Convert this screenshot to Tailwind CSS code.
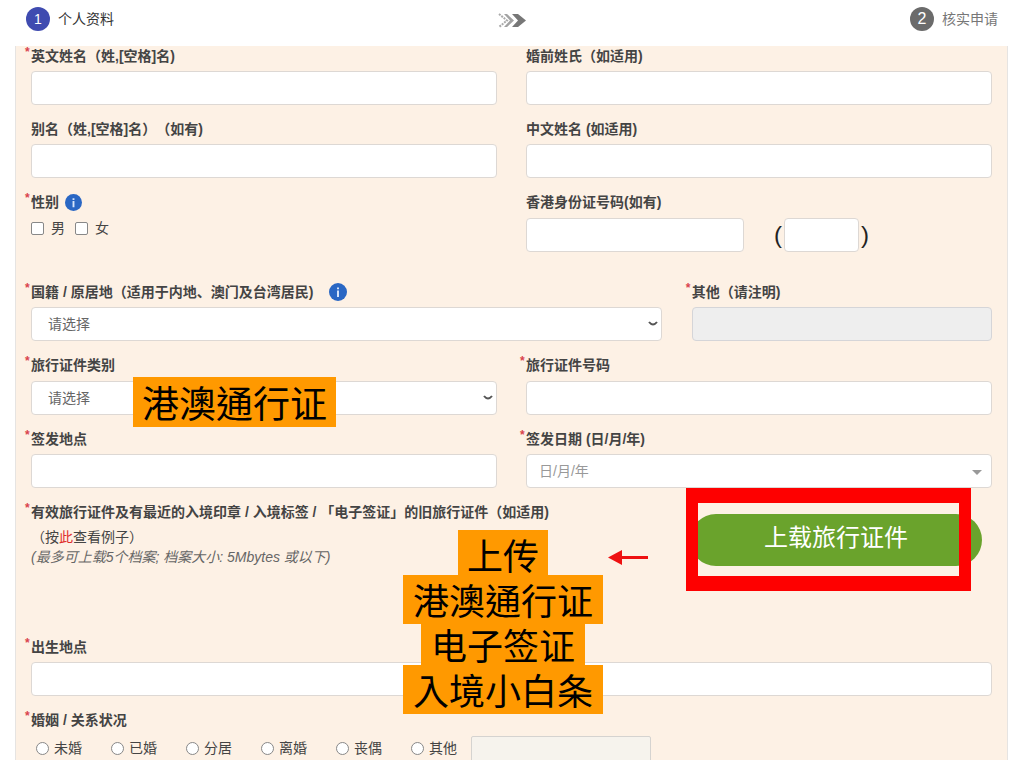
<!DOCTYPE html>
<html lang="zh-CN">
<head>
<meta charset="utf-8">
<meta name="viewport" content="width=device-width, initial-scale=1">
<title>个人资料</title>
<script src="https://cdn.jsdelivr.net/npm/@tailwindcss/browser@4"></script>
</head>
<body class="bg-white font-['Liberation_Sans','Noto_Sans_CJK_SC',sans-serif] text-sm leading-5 text-[#444] overflow-x-hidden [text-spacing-trim:space-all]">
<header class="flex h-[46px] items-start justify-between px-[26px] pt-[7px]">
  <div class="flex items-center gap-2 text-[#333]">
    <span class="flex size-6 items-center justify-center rounded-full bg-[#3f4bb0] text-sm text-white">1</span>
    <span>个人资料</span>
  </div>
  <svg class="mt-1.5 h-[15px] w-7" viewBox="0 0 28 15" fill="none" aria-hidden="true">
    <path d="M1 1l8 6.500-8 6.500" stroke="#aaa" stroke-width="2" stroke-dasharray="2 1"/>
    <path d="M6 1h3l7 6.500-7 6.500H6l6-6.500z" fill="#a2a2a2"/>
    <path d="M14 1h6l8 6.500-8 6.500h-6l6-6.500z" fill="#777"/>
  </svg>
  <div class="flex items-center gap-2 text-[#777]">
    <span class="flex size-6 items-center justify-center rounded-full bg-[#6b6b6b] text-base text-white">2</span>
    <span>核实申请</span>
  </div>
</header>

<main class="mr-4 ml-[15px] overflow-hidden border-x border-[#e6e4e2] bg-[#fdf1e5] px-[15px] pb-5">
<form>
  <div class="mb-3.5 grid grid-cols-2 gap-[29px]">
    <div>
      <label for="en" class="relative mb-[5px] block font-bold"><span class="absolute -top-0.5 -left-1.5 text-xs text-[#d9434e]">*</span>英文姓名（姓,[空格]名)</label>
      <input id="en" class="block h-[34px] w-full rounded border border-[#ddd8d4] bg-white px-3">
    </div>
    <div>
      <label for="maiden" class="mb-[5px] block font-bold">婚前姓氏（如适用)</label>
      <input id="maiden" class="block h-[34px] w-full rounded border border-[#ddd8d4] bg-white px-3">
    </div>
  </div>

  <div class="mb-3.5 grid grid-cols-2 gap-[29px]">
    <div>
      <label for="alias" class="mb-[5px] block font-bold">别名（姓,[空格]名）（如有)</label>
      <input id="alias" class="block h-[34px] w-full rounded border border-[#ddd8d4] bg-white px-3">
    </div>
    <div>
      <label for="zh" class="mb-[5px] block font-bold">中文姓名 (如适用)</label>
      <input id="zh" class="block h-[34px] w-full rounded border border-[#ddd8d4] bg-white px-3">
    </div>
  </div>

  <div class="mb-[30px] grid grid-cols-2 gap-[29px]">
    <fieldset>
      <legend class="relative mb-1.5 flex items-center gap-1.5 font-bold"><span class="absolute -top-0.5 -left-1.5 text-xs text-[#d9434e]">*</span>性别
        <svg class="size-[17px]" viewBox="0 0 18 18" aria-hidden="true"><circle cx="9" cy="9" r="9" fill="#2a67c4"/><path d="M8 7.500h2V14H8zM8 4.500h2v1.800H8z" fill="#d5e4fa"/></svg>
      </legend>
      <div class="flex items-center gap-2.5">
        <label class="flex items-center gap-[7px]"><input type="checkbox" class="size-[13px] appearance-none rounded-xs border border-[#888] bg-white">男</label>
        <label class="flex items-center gap-[7px]"><input type="checkbox" class="size-[13px] appearance-none rounded-xs border border-[#888] bg-white">女</label>
      </div>
    </fieldset>
    <div>
      <label for="hkid" class="mb-1.5 block font-bold">香港身份证号码(如有)</label>
      <div class="flex items-center">
        <input id="hkid" class="block h-[34px] w-[218px] rounded border border-[#ddd8d4] bg-white px-3">
        <span class="ml-[30px] text-2xl text-[#222]">(</span>
        <input aria-label="校验码" class="mx-0.5 block h-[34px] w-[75px] rounded border border-[#ddd8d4] bg-white px-3">
        <span class="text-2xl text-[#222]">)</span>
      </div>
    </div>
  </div>

  <div class="mb-3.5 flex gap-[30px]">
    <div class="flex-[630]">
      <label for="nat" class="relative mb-[5px] flex items-center font-bold"><span class="absolute -top-0.5 -left-1.5 text-xs text-[#d9434e]">*</span>国籍 / 原居地（适用于内地、澳门及台湾居民)
        <svg class="ml-4 size-[18px]" viewBox="0 0 18 18" aria-hidden="true"><circle cx="9" cy="9" r="9" fill="#2a67c4"/><path d="M8 7.500h2V14H8zM8 4.500h2v1.800H8z" fill="#d5e4fa"/></svg>
      </label>
      <div class="relative">
        <select id="nat" class="block h-[34px] w-full appearance-none rounded border border-[#ddd8d4] bg-white px-4 text-[#666]"><option>请选择</option></select>
        <svg class="pointer-events-none absolute top-3.5 right-1 h-[6px] w-2.5" viewBox="0 0 10 6" fill="none" stroke="#555" stroke-width="2" aria-hidden="true"><path d="M1 1q4 5 8 0"/></svg>
      </div>
    </div>
    <div class="flex-[300]">
      <label for="other" class="relative mb-[5px] block font-bold"><span class="absolute -top-0.5 -left-1.5 text-xs text-[#d9434e]">*</span>其他（请注明)</label>
      <input id="other" disabled class="block h-[34px] w-full rounded border border-[#d5d5d8] bg-[#eee] px-3">
    </div>
  </div>

  <div class="mb-3.5 grid grid-cols-2 gap-[29px]">
    <div>
      <label for="doctype" class="relative mb-1.5 block font-bold"><span class="absolute -top-0.5 -left-1.5 text-xs text-[#d9434e]">*</span>旅行证件类别</label>
      <div class="relative">
        <select id="doctype" class="block h-[34px] w-full appearance-none rounded border border-[#ddd8d4] bg-white px-4 text-[#666]"><option>请选择</option></select>
        <svg class="pointer-events-none absolute top-3.5 right-1 h-[6px] w-2.5" viewBox="0 0 10 6" fill="none" stroke="#555" stroke-width="2" aria-hidden="true"><path d="M1 1q4 5 8 0"/></svg>
        <span lang="zh-TW" class="absolute -top-1 left-[102px] bg-[#ff9900] px-[9px] font-['Noto_Sans_CJK_TC',sans-serif] text-[37px] leading-[50px] whitespace-nowrap text-black">港澳通行证</span>
      </div>
    </div>
    <div>
      <label for="docno" class="relative mb-1.5 block font-bold"><span class="absolute -top-0.5 -left-1.5 text-xs text-[#d9434e]">*</span>旅行证件号码</label>
      <input id="docno" class="block h-[34px] w-full rounded border border-[#ddd8d4] bg-white px-3">
    </div>
  </div>

  <div class="mb-3.5 grid grid-cols-2 gap-[29px]">
    <div>
      <label for="place" class="relative mb-[5px] block font-bold"><span class="absolute -top-0.5 -left-1.5 text-xs text-[#d9434e]">*</span>签发地点</label>
      <input id="place" class="block h-[34px] w-full rounded border border-[#ddd8d4] bg-white px-3">
    </div>
    <div>
      <label for="date" class="relative mb-[5px] block font-bold"><span class="absolute -top-0.5 -left-1.5 text-xs text-[#d9434e]">*</span>签发日期 (日/月/年)</label>
      <div class="relative">
        <input id="date" placeholder="日/月/年" class="block h-[34px] w-full rounded border border-[#ddd8d4] bg-white px-3 placeholder:text-[#999]">
        <svg class="absolute top-4 right-2.5 h-[5px] w-2.5" viewBox="0 0 10 5" aria-hidden="true"><path d="M0 0h10L5 5z" fill="#999"/></svg>
      </div>
    </div>
  </div>

  <div class="relative flex h-[135px] items-start justify-between">
    <div>
      <p class="relative mb-[5px] font-bold"><span class="absolute -top-0.5 -left-1.5 text-xs text-[#d9434e]">*</span>有效旅行证件及有最近的入境印章 / 入境标签 / 「电子签证」的旧旅行证件（如适用)</p>
      <p>（按<a href="#" class="text-[#e02b2b]">此</a>查看例子）</p>
      <p class="text-[#666] italic">(最多可上载5个档案; 档案大小: 5Mbytes 或以下)</p>
    </div>
    <button type="button" class="mt-3 mr-2.5 h-[52px] w-[292px] rounded-full bg-[#6aa32c] pb-1 text-2xl text-white">上载旅行证件</button>
    <div class="absolute -top-3.5 right-[21px] h-[103px] w-[285px] border-x-12 border-y-15 border-[#fe0000]"></div>
    <svg class="absolute top-12 right-[344px] h-4 w-10" viewBox="0 0 40 16" aria-hidden="true"><path d="M0 7.500L14 0v15z M13 6h27v3H13z" fill="#ee1111"/></svg>
    <div lang="zh-TW" class="absolute top-7 left-[372px] z-10 flex flex-col items-center font-['Noto_Sans_CJK_TC',sans-serif] text-4xl leading-[49px] whitespace-nowrap text-black">
      <span class="-mb-1 bg-[#ff9900] px-[9px]">上传</span>
      <span class="-mb-1 bg-[#ff9900] px-2.5">港澳通行证</span>
      <span class="-mb-1 bg-[#ff9900] px-2.5">电子签证</span>
      <span class="bg-[#ff9900] px-2.5">入境小白条</span>
    </div>
  </div>

  <div class="mb-3.5">
    <label for="birth" class="relative mb-[5px] block font-bold"><span class="absolute -top-0.5 -left-1.5 text-xs text-[#d9434e]">*</span>出生地点</label>
    <input id="birth" class="block h-[34px] w-full rounded border border-[#ddd8d4] bg-white px-3">
  </div>

  <fieldset>
    <legend class="relative mb-1.5 font-bold"><span class="absolute -top-0.5 -left-1.5 text-xs text-[#d9434e]">*</span>婚姻 / 关系状况</legend>
    <div class="flex items-start pl-[5px]">
      <label class="flex w-[75px] items-center gap-[5px] pt-0.5"><input type="radio" name="m" class="size-[13px] appearance-none rounded-full border border-[#888] bg-white">未婚</label>
      <label class="flex w-[75px] items-center gap-[5px] pt-0.5"><input type="radio" name="m" class="size-[13px] appearance-none rounded-full border border-[#888] bg-white">已婚</label>
      <label class="flex w-[75px] items-center gap-[5px] pt-0.5"><input type="radio" name="m" class="size-[13px] appearance-none rounded-full border border-[#888] bg-white">分居</label>
      <label class="flex w-[75px] items-center gap-[5px] pt-0.5"><input type="radio" name="m" class="size-[13px] appearance-none rounded-full border border-[#888] bg-white">离婚</label>
      <label class="flex w-[75px] items-center gap-[5px] pt-0.5"><input type="radio" name="m" class="size-[13px] appearance-none rounded-full border border-[#888] bg-white">丧偶</label>
      <label class="flex w-[60px] items-center gap-[5px] pt-0.5"><input type="radio" name="m" class="size-[13px] appearance-none rounded-full border border-[#888] bg-white">其他</label>
      <input aria-label="其他状况" disabled class="h-[34px] w-[180px] rounded-xs border border-[#d5d3d0] bg-[#f6f3ed]">
    </div>
  </fieldset>
</form>
</main>
</body>
</html>
